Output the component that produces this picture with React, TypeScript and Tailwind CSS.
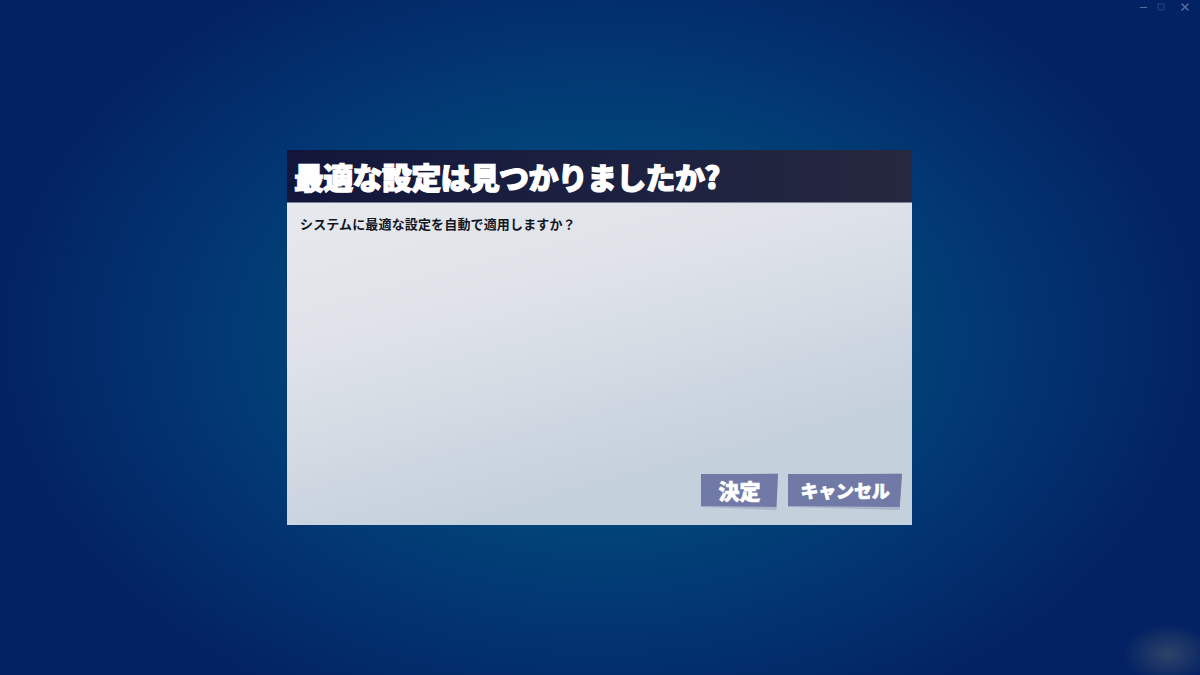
import React from 'react';
import { Minus, Square, X } from 'lucide-react';

const jp = "font-['Noto_Sans_CJK_JP',sans-serif]";

export default function App() {
    return (
        <div className={`relative w-full h-screen overflow-hidden flex items-center justify-center bg-[radial-gradient(ellipse_50%_62%_at_50%_50%,#01507f_0%,#01487b_38%,#023471_70%,#032263_100%)] ${jp}`}>
            <div className="absolute top-0 right-0 flex items-center gap-[8px] pt-[1px] pr-[9px] text-[#5a6f9c]">
                <Minus className="w-[11px] h-[11px]" strokeWidth={2.5} />
                <Square className="w-[8px] h-[8px] opacity-70" strokeWidth={2} />
                <X className="w-[12px] h-[12px] ml-[6px]" strokeWidth={3} />
            </div>

            <div className="absolute bottom-0 right-0 w-[90px] h-[60px] bg-[radial-gradient(ellipse_50%_50%_at_65%_65%,rgba(90,100,110,0.5),rgba(90,100,110,0))]" />

            <div className="w-[625px] h-[375px] -ml-[1px] flex flex-col bg-[linear-gradient(165deg,#e8ebef_0%,#dfe3e9_38%,#c4d0dc_78%,#c4d0dc_100%)]">
                <div className="h-[53px] shrink-0 flex items-center pl-[7px] border-b border-[#7d8197] bg-[linear-gradient(90deg,#12163a_0%,#1c2040_50%,#26283e_100%)]">
                    <h1 className="text-[30px] leading-none font-black text-white tracking-[-0.7px] [-webkit-text-stroke:1.2px_white]">
                        最適な設定は見つかりましたか?
                    </h1>
                </div>

                <div className="flex-1 flex flex-col pl-[13px] pr-[10px] pt-[12px] pb-[15px]">
                    <p className="text-[13px] leading-[18px] font-bold tracking-[0.15px] text-[#14161f]">
                        システムに最適な設定を自動で適用しますか？
                    </p>

                    <div className="mt-auto flex justify-end gap-[10px]">
                        <DialogButton label="決定" className="w-[77px] text-[21px]" />
                        <DialogButton label="キャンセル" className="w-[114px] text-[18px] tracking-[-0.2px]" />
                    </div>
                </div>
            </div>
        </div>
    );
}

function DialogButton({ label, className }: { label: string; className: string }) {
    return (
        <button className={`relative ${className} h-[37px] text-white`}>
            <span className="absolute inset-0 bg-[#a9b3c9] [clip-path:polygon(0_6%,100%_0,98%_100%,0_92%)]" />
            <span className="absolute inset-0 bg-[#717aa6] [clip-path:polygon(0_3%,100%_3%,98%_92%,0_89%)]" />
            <span className="relative flex h-full items-center justify-center pb-[2px] font-black [-webkit-text-stroke:0.6px_white]">
                {label}
            </span>
        </button>
    );
}
